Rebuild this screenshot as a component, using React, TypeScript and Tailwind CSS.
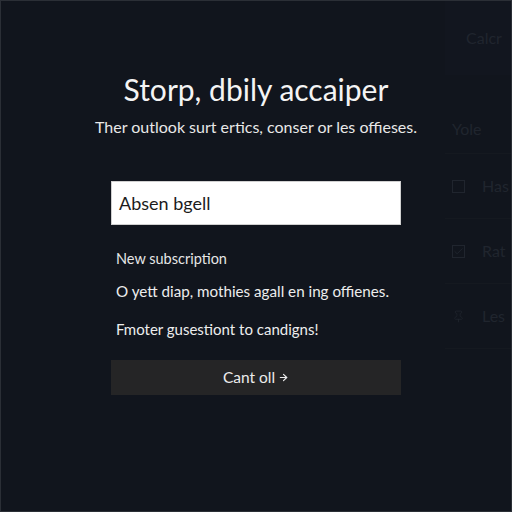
import { ArrowRight, Check, Pin } from 'lucide-react'

const FONT = { fontFamily: 'Lato, "Noto Sans", "Liberation Sans", sans-serif' }

function SideRow({ children }: { children: React.ReactNode }) {
  return (
    <div className="flex h-[65px] items-center gap-[17px] overflow-hidden border-b border-[#151920] pl-[7px] text-[16px] text-[#20252e]">
      {children}
    </div>
  )
}

export default function App() {
  return (
    <div
      className="relative h-[512px] w-[512px] overflow-hidden border border-[#2b2f36] bg-[#11151d]"
      style={FONT}
    >
      {/* page behind the dialog */}
      <div className="flex h-full">
        <div className="flex-1" />
        <aside className="flex w-[66px] flex-col">
          <div className="flex h-[74px] items-center justify-center bg-[#12161f] pl-3 text-[16px] text-[#20252e]">
            Calcr
          </div>
          <div className="flex h-[79px] items-center border-b border-[#151920] pl-[7px] pt-[30px] text-[16px] text-[#20252e]">
            Yole
          </div>
          <SideRow>
            <span className="size-[13px] shrink-0 border border-[#20252e]" />
            Has
          </SideRow>
          <SideRow>
            <span className="flex size-[13px] shrink-0 items-center justify-center border border-[#20252e]">
              <Check size={11} strokeWidth={2} />
            </span>
            Rat
          </SideRow>
          <SideRow>
            <Pin size={13} strokeWidth={1.5} className="shrink-0" />
            Les
          </SideRow>
        </aside>
      </div>

      {/* dialog */}
      <div className="absolute inset-0 flex flex-col items-center pt-[70px]">
        <h1 className="whitespace-nowrap text-[30px] leading-[36px] text-[#f4f4f4]">Storp, dbily accaiper</h1>
        <p className="mt-[8px] whitespace-nowrap text-[16px] leading-[24px] text-[#e8e8e8]">
          Ther outlook surt ertics, conser or les offieses.
        </p>

        <div className="mt-[42px] flex w-[290px] flex-col">
          <div className="flex h-[44px] items-center border border-[#d0d0d0] bg-white px-[7px] text-[18px] text-[#1c1c1c]">
            Absen bgell
          </div>
          <div className="mt-[22px] whitespace-nowrap pl-[5px] text-[14.5px] leading-[24px] text-[#e6e6e6]">
            New subscription
          </div>
          <div className="mt-[8px] whitespace-nowrap pl-[5px] text-[15.2px] leading-[24px] text-[#ededed]">
            O yett diap, mothies agall en ing offienes.
          </div>
          <div className="mt-[14px] whitespace-nowrap pl-[5px] text-[15px] leading-[24px] text-[#ededed]">
            Fmoter gusestiont to candigns!
          </div>
          <button className="mt-[19px] flex h-[35px] items-center justify-center gap-[3px] bg-[#252526] text-[15.5px] text-[#ececec]">
            Cant oll
            <ArrowRight size={11} strokeWidth={2.5} />
          </button>
        </div>
      </div>
    </div>
  )
}
